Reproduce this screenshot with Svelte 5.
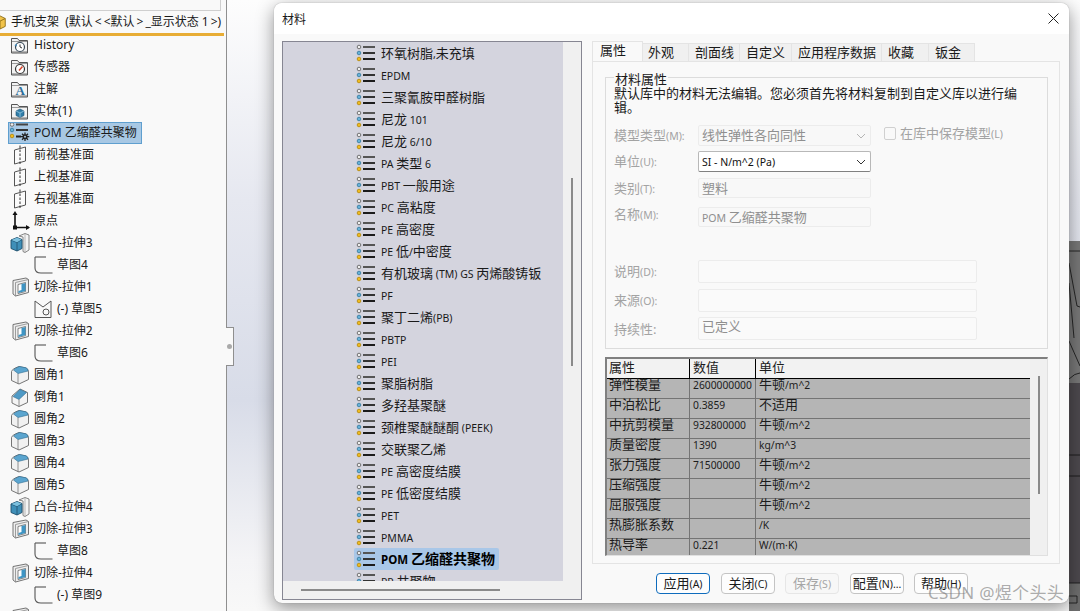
<script>
	// feature tree rows: icon name, label, child rows are indented
	const tree = [
		{ icon: "f-history", text: "History" },
		{ icon: "f-sensor", text: "传感器" },
		{ icon: "f-note", text: "注解" },
		{ icon: "f-solid", text: "实体(1)" },
		{ icon: "mat-gear", text: "POM 乙缩醛共聚物", selected: true },
		{ icon: "plane", text: "前视基准面" },
		{ icon: "plane", text: "上视基准面" },
		{ icon: "plane", text: "右视基准面" },
		{ icon: "origin", text: "原点" },
		{ icon: "boss", text: "凸台-拉伸3" },
		{ icon: "sketch", text: "草图4", child: true },
		{ icon: "cut", text: "切除-拉伸1" },
		{ icon: "sketch-v", text: "(-) 草图5", child: true },
		{ icon: "cut", text: "切除-拉伸2" },
		{ icon: "sketch", text: "草图6", child: true },
		{ icon: "fillet", text: "圆角1" },
		{ icon: "chamfer", text: "倒角1" },
		{ icon: "fillet", text: "圆角2" },
		{ icon: "fillet", text: "圆角3" },
		{ icon: "fillet", text: "圆角4" },
		{ icon: "fillet", text: "圆角5" },
		{ icon: "boss", text: "凸台-拉伸4" },
		{ icon: "cut", text: "切除-拉伸3" },
		{ icon: "sketch", text: "草图8", child: true },
		{ icon: "cut", text: "切除-拉伸4" },
		{ icon: "sketch", text: "(-) 草图9", child: true },
		{ icon: "cut", text: "" }
	];

	const materials = [
		"环氧树脂,未充填", "EPDM", "三聚氰胺甲醛树脂", "尼龙 101", "尼龙 6/10", "PA 类型 6",
		"PBT 一般用途", "PC 高粘度", "PE 高密度", "PE 低/中密度", "有机玻璃 (TM) GS 丙烯酸铸钣",
		"PF", "聚丁二烯(PB)", "PBTP", "PEI", "聚脂树脂", "多羟基聚醚", "颈椎聚醚醚酮 (PEEK)",
		"交联聚乙烯", "PE 高密度结膜", "PE 低密度结膜", "PET", "PMMA", "POM 乙缩醛共聚物", "PP 共聚物"
	];

	const tabs = ["属性", "外观", "剖面线", "自定义", "应用程序数据", "收藏", "钣金"];

	const props = [
		["弹性模量", "2600000000", "牛顿/m^2"],
		["中泊松比", "0.3859", "不适用"],
		["中抗剪模量", "932800000", "牛顿/m^2"],
		["质量密度", "1390", "kg/m^3"],
		["张力强度", "71500000", "牛顿/m^2"],
		["压缩强度", "", "牛顿/m^2"],
		["屈服强度", "", "牛顿/m^2"],
		["热膨胀系数", "", "/K"],
		["热导率", "0.221", "W/(m·K)"]
	];

	const buttons = [
		{ label: "应用(A)", kind: "primary" },
		{ label: "关闭(C)" },
		{ label: "保存(S)", kind: "off" },
		{ label: "配置(N)..." },
		{ label: "帮助(H)" }
	];

	// the dialog draws ascii smaller than the CJK glyphs, so split the string
	const runs = (s) =>
		s.split(/([\x00-\x7f·]+)/).filter(Boolean).map((t) => ({ t, sm: /^[\x00-\x7f·]/.test(t) }));
</script>

{#snippet mixed(s)}
	{#each runs(s) as r}<span class:sm={r.sm}>{r.t}</span>{/each}
{/snippet}

<svg class="defs" aria-hidden="true">
	<defs>
		<g id="folder">
			<path d="M1.5 3.5h6l1.5 2h8.500v12.500h-16z" fill="#f2f2f2" stroke="#555" />
			<path d="M2 6.500h15" stroke="#999" />
			<path d="M2 17h15" stroke="#777" />
		</g>
		<symbol id="f-history" viewBox="0 0 20 20">
			<use href="#folder" />
			<circle cx="10" cy="12" r="4.500" fill="#fff" stroke="#3a4a58" stroke-width="1.200" />
			<path d="M10 9.500V12l2 1" fill="none" stroke="#333" />
			<path d="M4.500 10.500l2-2 .5 3z" fill="#3d86b8" />
		</symbol>
		<symbol id="f-sensor" viewBox="0 0 20 20">
			<use href="#folder" />
			<circle cx="10" cy="12" r="4.500" fill="#fff" stroke="#333" stroke-width="1.200" />
			<path d="M9 13.500l3.500-4" stroke="#d5432a" stroke-width="1.500" />
		</symbol>
		<symbol id="f-note" viewBox="0 0 20 20">
			<use href="#folder" />
			<text x="5.500" y="16" class="icon-a">A</text>
		</symbol>
		<symbol id="f-solid" viewBox="0 0 20 20">
			<use href="#folder" />
			<path d="M10 8l4 2v4.500l-4 2-4-2V10z" fill="#2f7da8" stroke="#1d4f6e" stroke-width=".6" />
			<path d="M6 10l4 2 4-2M10 12v4.500" fill="none" stroke="#a8d4ea" stroke-width=".7" />
		</symbol>
		<symbol id="mat" viewBox="0 0 20 18">
			<circle cx="3" cy="3" r="1.800" fill="#eee" stroke="#666" stroke-width=".9" />
			<circle cx="3" cy="9" r="1.800" fill="#68b3d8" stroke="#3a7ea4" stroke-width=".9" />
			<circle cx="3" cy="15" r="1.800" fill="#f0bc1e" stroke="#b98c10" stroke-width=".9" />
			<rect x="7" y="2" width="12" height="2" fill="#555" />
			<rect x="7" y="8" width="12" height="2" fill="#333" />
			<rect x="7" y="14" width="12" height="2" fill="#1c1c1c" />
		</symbol>
		<symbol id="mat-gear" viewBox="0 0 20 20">
			<circle cx="2" cy="1.500" r="1.800" fill="#eee" stroke="#666" stroke-width=".9" />
			<circle cx="2" cy="7" r="1.800" fill="#68b3d8" stroke="#3a7ea4" stroke-width=".9" />
			<circle cx="2" cy="13" r="1.800" fill="#f0bc1e" stroke="#b98c10" stroke-width=".9" />
			<rect x="6" y="0.500" width="12" height="2" fill="#444" />
			<rect x="6" y="6" width="12" height="2" fill="#333" />
			<rect x="6" y="12.500" width="5" height="2" fill="#222" />
			<path d="M15 9.500v8.500M10.700 13.700h8.600M12 10.700l6 6M18 10.700l-6 6" stroke="#222" stroke-width="1.300" />
			<circle cx="15" cy="13.700" r="2.500" fill="#222" />
			<circle cx="15" cy="13.700" r="1" fill="#a8c8e4" />
		</symbol>
		<symbol id="plane" viewBox="0 0 20 20">
			<path d="M4.500 5l11-3v14l-11 3z" fill="#fbfbfb" stroke="#555" />
			<path d="M10 .5v19" stroke="#333" stroke-dasharray="2.500 1.500" />
		</symbol>
		<symbol id="origin" viewBox="0 0 20 20">
			<path d="M5 2v14.500h14" fill="none" stroke="#111" stroke-width="1.600" />
			<path d="M5 0l2.500 4h-5zM20 16.500l-4-2.500v5z" fill="#111" />
			<rect x="3" y="14.500" width="4" height="4" fill="#111" />
		</symbol>
		<symbol id="boss" viewBox="0 0 20 20">
			<path d="M9 3l6-2.500 4 1.500v15l-4 2.500-2-1V4z" fill="#f4f4f4" stroke="#777" stroke-width=".9" />
			<path d="M15 1v18" stroke="#aaa" stroke-width=".8" />
			<path d="M1 7l6-2.500 5 2v9l-5 2.500-6-2.500z" fill="#3f8fb8" stroke="#1e4f6c" stroke-width=".9" />
			<path d="M1 7l6 2.500 5-3M7 9.500V18" fill="none" stroke="#1e4f6c" stroke-width=".8" />
			<path d="M1.500 7l5.500-2.200 4.500 1.800-4.500 2.600z" fill="#7cc0de" />
		</symbol>
		<symbol id="cut" viewBox="0 0 20 20">
			<path d="M3 3.500l13-2.500 2.500 1.500v13l-13 3.500-2.500-2z" fill="#eee" stroke="#666" stroke-width=".9" />
			<path d="M5.500 5.500l13-3M5.500 5.500V19" fill="none" stroke="#888" stroke-width=".8" />
			<path d="M8 7.500l7.500-2v9l-7.500 2z" fill="#fff" stroke="#666" stroke-width=".8" />
			<path d="M11.500 7v6l-3 1v2l7-2V6z" fill="#3f95c4" />
		</symbol>
		<symbol id="fillet" viewBox="0 0 20 20">
			<path d="M1.500 6.500Q2 4 9 1.500l7 1.500q2.500 1 2.500 4v7.500L9 19l-7.500-3.500z" fill="#f1f1f1" stroke="#666" stroke-width=".9" />
			<path d="M8 8.500V19" stroke="#777" stroke-width=".8" />
			<path d="M8 8.500l10-2.500q0-2.500-2-3.200L9.500 1.500Q5 3 3.500 5z" fill="#5ba5cf" stroke="#2d6c90" stroke-width=".6" />
		</symbol>
		<symbol id="chamfer" viewBox="0 0 20 20">
			<path d="M2 9L10 2l7.500 3.500v10L9 19.500 2 16z" fill="#f4f4f4" stroke="#666" stroke-width=".9" />
			<path d="M9 12.500v7" stroke="#777" stroke-width=".8" />
			<path d="M3 9.500l7-7 6.500 3-7.500 7z" fill="#4f9ac6" stroke="#2d6c90" stroke-width=".6" />
		</symbol>
		<symbol id="sketch" viewBox="0 0 20 20">
			<path d="M1 2v11q0 5 6 5h11.500" fill="none" stroke="#555" stroke-width="1.100" />
			<path d="M1 2h11" stroke="#555" stroke-width="1.100" />
		</symbol>
		<symbol id="sketch-v" viewBox="0 0 20 20">
			<path d="M1 2l8 6 8-6v16.500H1z" fill="none" stroke="#555" stroke-width="1" />
			<circle cx="12" cy="13" r="3" fill="none" stroke="#555" stroke-width="1" />
		</symbol>
		<symbol id="chev" viewBox="0 0 10 6">
			<path d="M1 1l4 4 4-4" fill="none" stroke="currentColor" />
		</symbol>
	</defs>
</svg>

<div class="page">
	<aside class="tree">
		<div class="search"></div>
		<div class="root">
			<svg class="root-ic" viewBox="0 0 8 16">
				<path d="M-6 4l6-3 6 3v9l-6 3-6-3z" fill="#f1c34a" stroke="#8c6a14" />
				<path d="M0 7v9M-6 4l6 3 6-3" fill="none" stroke="#8c6a14" />
			</svg>
			<span>手机支架 &nbsp;(默认&thinsp;&lt;&thinsp;&lt;默认&thinsp;&gt;&thinsp;_显示状态 1&thinsp;&gt;)</span>
		</div>
		<div class="rule"></div>
		{#each tree as node}
			<div class="node" class:child={node.child} class:selected={node.selected}>
				<svg class="ic"><use href="#{node.icon}" /></svg>
				<span>{node.text}</span>
			</div>
		{/each}
		<div class="grip"><i></i></div>
	</aside>

	<main class="desk">
		<svg class="cad" viewBox="0 0 11 370">
			<rect width="11" height="142" fill="#777" />
			<rect y="142" width="11" height="200" fill="#4d494e" />
			<rect y="342" width="11" height="28" fill="#6e6e6e" />
			<path d="M0 10h11M0 22L8 65l3 1M0 42l5 55M0 100l11 25M0 138q6-6 11-6M0 214h11M0 235h11M0 342h11M0 355h8v7H0" fill="none" stroke="#111" stroke-width=".8" />
		</svg>

		<section class="dialog">
			<header class="title">
				<span>材料</span>
				<svg class="close" viewBox="0 0 11 11"><path d="M.5.5l10 10M10.500.5l-10 10" stroke="#222" /></svg>
			</header>

			<div class="body">
				<div class="list">
					<div class="items">
						{#each materials as m, i}
							<div class="mat-row">
								<div class="mat" class:on={i === 23}>
									<svg class="mat-ic"><use href="#mat" /></svg>
									<span class="mat-name">{@render mixed(m)}</span>
								</div>
							</div>
						{/each}
					</div>
					<div class="vbar"><i></i></div>
					<div class="hbar"><i></i></div>
					<div class="corner"></div>
				</div>

				<div class="side">
					<nav class="tabs">
						{#each tabs as t, i}
							<span class="tab" class:active={i === 0}>{t}</span>
						{/each}
					</nav>

					<div class="panel">
						<div class="group">
							<div class="legend">材料属性</div>
							<p class="note">默认库中的材料无法编辑。您必须首先将材料复制到自定义库以进行编辑。</p>

							<div class="row r1">
								<span class="lab">{@render mixed("模型类型(M):")}</span>
								<div class="field narrow tall">
									线性弹性各向同性
									<svg class="chev"><use href="#chev" /></svg>
								</div>
								<span class="check"></span>
								<span class="lab check-lab">{@render mixed("在库中保存模型(L)")}</span>
							</div>
							<div class="row r2">
								<span class="lab">{@render mixed("单位(U):")}</span>
								<div class="field narrow tall live">
									<span class="sm">SI - N/m^2 (Pa)</span>
									<svg class="chev"><use href="#chev" /></svg>
								</div>
							</div>
							<div class="row r3">
								<span class="lab">{@render mixed("类别(T):")}</span>
								<div class="field narrow">塑料</div>
							</div>
							<div class="row r4">
								<span class="lab">{@render mixed("名称(M):")}</span>
								<div class="field narrow">{@render mixed("POM 乙缩醛共聚物")}</div>
							</div>
							<div class="row r5">
								<span class="lab">{@render mixed("说明(D):")}</span>
								<div class="field wide"></div>
							</div>
							<div class="row r6">
								<span class="lab">{@render mixed("来源(O):")}</span>
								<div class="field wide"></div>
							</div>
							<div class="row r7">
								<span class="lab">持续性:</span>
								<div class="field wide top">已定义</div>
							</div>
						</div>

						<div class="grid-box">
							<div class="grid-main">
								<div class="grid-row head">
									<span>属性</span><span>数值</span><span>单位</span>
								</div>
								{#each props as p}
									<div class="grid-row">
										<span>{@render mixed(p[0])}</span>
										<span>{@render mixed(p[1])}</span>
										<span>{@render mixed(p[2])}</span>
									</div>
								{/each}
							</div>
							<div class="grid-bar"><i></i></div>
						</div>
					</div>

					<footer class="actions">
						{#each buttons as b}
							<button class={b.kind}>{@render mixed(b.label)}</button>
						{/each}
					</footer>
				</div>
			</div>
		</section>

		<div class="mark">CSDN @煜个头头</div>
	</main>
</div>

<style>
	:global(body) {
		margin: 0;
		overflow: hidden;
	}

	.defs {
		position: absolute;
		width: 0;
		height: 0;
	}

	.icon-a {
		font: bold 13px "Liberation Serif", serif;
		fill: #2a6d9a;
	}

	.page {
		display: flex;
		width: 1080px;
		height: 611px;
		overflow: hidden;
		font-family: "Noto Sans", "Noto Sans CJK SC", sans-serif;
		color: #1a1a1a;
	}

	.sm {
		font-size: 10.5px;
	}

	/* feature tree */
	.tree {
		position: relative;
		flex: none;
		width: 226px;
		height: 611px;
		background: #f9f9f9;
		border-right: 1px solid #8f8f8f;
		font-size: 12px;
		line-height: 22px;
		z-index: 1;
	}

	.search {
		width: 220px;
		height: 10px;
		border: 1px solid #cfcfcf;
		border-top: 0;
		border-left: 0;
	}

	.root {
		display: flex;
		align-items: center;
		height: 22px;
		white-space: nowrap;
	}

	.root-ic {
		flex: none;
		width: 7px;
		height: 16px;
		margin-right: 4px;
	}

	.rule {
		width: 224px;
		height: 3px;
		background: #e8ad35;
		margin-bottom: -2px;
	}

	.node {
		display: flex;
		align-items: center;
		gap: 4px;
		width: fit-content;
		height: 22px;
		margin-left: 8px;
		padding: 0 5px 0 2px;
		white-space: nowrap;
	}

	.node.child {
		margin-left: 32px;
		gap: 3px;
	}

	.node.selected {
		background: #a8c8e4;
		box-shadow: inset 0 0 0 1px #5f9fcf;
	}

	.ic {
		flex: none;
		width: 20px;
		height: 20px;
	}

	.grip {
		position: absolute;
		left: 226px;
		top: 327px;
		display: flex;
		align-items: center;
		justify-content: center;
		width: 7px;
		height: 37px;
		background: #f9f9f9;
		border: 1px solid #8f8f8f;
		border-left: 0;
	}

	.grip i {
		width: 5px;
		height: 5px;
		border-radius: 50%;
		background: #aaa;
	}

	/* graphics area behind the dialog */
	.desk {
		position: relative;
		flex: 1;
		background: linear-gradient(180deg, #fdfdfd 0, #e6e8f0 200px, #d8dce8 400px, #f4f4f6 560px, #f8f8f8 611px);
	}

	.cad {
		position: absolute;
		right: 0;
		top: 241px;
		width: 11px;
		height: 370px;
	}

	.dialog {
		position: absolute;
		left: 47px;
		top: 3px;
		display: flex;
		flex-direction: column;
		width: 795px;
		height: 600px;
		background: #f9f9f9;
		border-radius: 8px;
		box-shadow: 0 0 1px #777, 0 5px 18px rgba(0, 0, 0, 0.42);
		overflow: hidden;
	}

	.title {
		display: flex;
		align-items: center;
		justify-content: space-between;
		flex: none;
		height: 31px;
		padding: 0 10px 0 8px;
		background: #fff;
		font-size: 12px;
	}

	.close {
		width: 11px;
		height: 11px;
	}

	.body {
		display: flex;
		flex: 1;
		gap: 10px;
		padding: 7px 9px 2px 8px;
		min-height: 0;
	}

	/* material list */
	.list {
		display: grid;
		grid-template-columns: 280px 18px;
		grid-template-rows: 539px 18px;
		flex: none;
		width: 298px;
		height: 557px;
		border: 1px solid #868692;
		background: #f0f0f0;
	}

	.items {
		background: #d4d4de;
		overflow: hidden;
		font-size: 13px;
		line-height: 22px;
	}

	.mat-row {
		height: 22px;
		padding-left: 71px;
	}

	.mat {
		display: flex;
		align-items: center;
		gap: 5px;
		width: fit-content;
		height: 22px;
		padding: 0 4px 0 2px;
		border-radius: 2px;
		white-space: nowrap;
	}

	.mat.on {
		background: #a9c7e8;
		font-size: 14px;
		font-weight: 700;
		color: #000;
	}

	.mat.on .sm {
		font-size: 11.5px;
	}

	.mat-ic {
		flex: none;
		width: 20px;
		height: 18px;
	}

	.vbar {
		padding: 136px 0 0 8px;
	}

	.vbar i {
		display: block;
		width: 2px;
		height: 188px;
		background: #8a8a8a;
	}

	.hbar {
		padding: 8px 0 0 18px;
	}

	.hbar i {
		display: block;
		width: 199px;
		height: 2px;
		background: #8a8a8a;
	}

	/* right side */
	.side {
		display: flex;
		flex-direction: column;
		flex: none;
		width: 468px;
	}

	.tabs {
		display: flex;
		align-items: flex-end;
		flex: none;
		height: 20px;
		font-size: 13px;
		line-height: 16px;
	}

	.tab {
		height: 18px;
		padding: 0 6px;
		background: #f0f0f0;
		border: 1px solid #e4e4e4;
		border-bottom: 0;
		margin-left: -1px;
		box-sizing: border-box;
		white-space: nowrap;
	}

	.tab:nth-child(2) { width: 47px; padding-left: 5px; }
	.tab:nth-child(3) { width: 52px; }
	.tab:nth-child(4) { width: 53px; }
	.tab:nth-child(5) { width: 91px; }
	.tab:nth-child(6) { width: 48px; }
	.tab:nth-child(7) { width: 47px; }

	.tab.active {
		width: 51px;
		height: 20px;
		margin-left: 0;
		padding: 0 7px;
		background: #f9f9f9;
		line-height: 17px;
	}

	.panel {
		flex: none;
		height: 503px;
		box-sizing: border-box;
		padding: 15px 11px 0 12px;
		border: 1px solid #e4e4e4;
		background: #f9f9f9;
	}

	.group {
		box-sizing: border-box;
		height: 272px;
		padding: 0 8px;
		border: 1px solid #dcdcdc;
	}

	.legend {
		width: fit-content;
		margin: -6px 0 0;
		padding: 0 1px;
		font-size: 13px;
		line-height: 14px;
		background: #f9f9f9;
	}

	.note {
		margin: 0;
		width: 406px;
		font-size: 13px;
		line-height: 14px;
	}

	.row {
		display: flex;
		align-items: center;
	}

	.r1 { margin-top: 11px; }
	.r2 { margin-top: 5px; }
	.r3 { margin-top: 6px; }
	.r4 { margin-top: 9px; }
	.r5 { margin-top: 33px; }
	.r6 { margin-top: 6px; }
	.r7 { margin-top: 5px; }

	.r4 .lab {
		margin-top: -6px;
	}

	.lab {
		flex: none;
		width: 84px;
		font-size: 13px;
		line-height: 14px;
		color: #a3a3a3;
		white-space: nowrap;
	}

	.field {
		position: relative;
		box-sizing: border-box;
		height: 20px;
		padding-left: 3px;
		border: 1px solid #ececec;
		border-radius: 2px;
		background: #f8f8f8;
		font-size: 13px;
		line-height: 18px;
		color: #8f8f8f;
		white-space: nowrap;
	}

	.narrow { width: 173px; }
	.tall { height: 21px; }
	.wide { width: 279px; height: 23px; background: #fafafa; }
	.top { line-height: 17px; }

	.live {
		background: #fff;
		border-color: #b8b8b8;
		border-bottom-color: #808080;
		color: #111;
	}

	.chev {
		position: absolute;
		right: 4px;
		top: 7px;
		width: 10px;
		height: 6px;
		color: #b5b5b5;
	}

	.live .chev {
		color: #333;
	}

	.check {
		flex: none;
		box-sizing: border-box;
		width: 12px;
		height: 13px;
		margin: -4px 4px 0 13px;
		border: 1px solid #d0d0d0;
		border-radius: 2px;
	}

	.check-lab {
		width: auto;
		margin-top: -4px;
	}

	/* property grid */
	.grid-box {
		display: flex;
		box-sizing: border-box;
		width: 443px;
		height: 199px;
		margin-top: 8px;
		background: #f0f0f0;
		border-top: 2px solid #808080;
		border-left: 2px solid #808080;
		border-right: 1px solid #e0e0e0;
		border-bottom: 1px solid #e0e0e0;
	}

	.grid-main {
		flex: none;
		width: 423px;
		overflow: hidden;
	}

	.grid-row {
		display: grid;
		grid-template-columns: 83px 66px 1fr;
		box-sizing: border-box;
		height: 20px;
		background: #b5b5b5;
		border-bottom: 1px solid #747474;
		font-size: 13px;
		line-height: 10px;
		color: #1c1c1c;
	}

	.grid-row > span {
		padding: 0 0 0 3px;
		border-right: 1px solid #747474;
		white-space: nowrap;
	}

	.grid-row > span:first-child {
		padding-left: 2px;
	}

	.grid-row > span:last-child {
		border-right: 0;
	}

	.grid-row .sm {
		font-size: 10.3px;
	}

	.grid-row.head {
		height: 20px;
		background: #f2f2f2;
		border-bottom: 1px solid #000;
		line-height: 16px;
	}

	.grid-row.head > span {
		border-right-color: #000;
	}

	.grid-bar {
		padding: 17px 0 0 8px;
	}

	.grid-bar i {
		display: block;
		width: 2px;
		height: 118px;
		background: #8a8a8a;
	}

	/* footer buttons */
	.actions {
		display: flex;
		gap: 10px;
		margin-top: 9px;
		padding-left: 64px;
	}

	button {
		flex: none;
		box-sizing: border-box;
		width: 54px;
		height: 21px;
		padding: 0;
		border: 1px solid #c4c4c4;
		border-radius: 4px;
		background: #fdfdfd;
		font: inherit;
		font-size: 13px;
		line-height: 17px;
		color: #1a1a1a;
		white-space: nowrap;
	}

	button:nth-child(2),
	button:nth-child(4) {
		margin-left: 1px;
	}

	button.primary {
		border-color: #0f6cbd;
	}

	button.off {
		border-color: #e6e6e6;
		background: #f7f7f7;
		color: #a6a6a6;
	}

	.mark {
		position: absolute;
		right: 16px;
		bottom: 6px;
		font-size: 17px;
		line-height: 24px;
		letter-spacing: 0.3px;
		color: rgba(120, 120, 120, 0.62);
		white-space: nowrap;
	}
</style>
